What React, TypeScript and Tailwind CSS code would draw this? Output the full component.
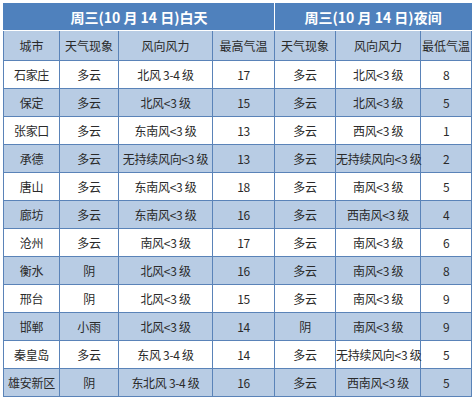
const rows: [string, string, string, string, string, string, string][] = [
  ["石家庄", "多云", "北风 3-4 级", "17", "多云", "北风<3 级", "8"],
  ["保定", "多云", "北风<3 级", "15", "多云", "北风<3 级", "5"],
  ["张家口", "多云", "东南风<3 级", "13", "多云", "西风<3 级", "1"],
  ["承德", "多云", "无持续风向<3 级", "13", "多云", "无持续风向<3 级", "2"],
  ["唐山", "多云", "东南风<3 级", "18", "多云", "南风<3 级", "5"],
  ["廊坊", "多云", "东南风<3 级", "16", "多云", "西南风<3 级", "4"],
  ["沧州", "多云", "南风<3 级", "17", "多云", "南风<3 级", "6"],
  ["衡水", "阴", "北风<3 级", "16", "多云", "南风<3 级", "8"],
  ["邢台", "阴", "北风<3 级", "15", "多云", "南风<3 级", "9"],
  ["邯郸", "小雨", "北风<3 级", "14", "阴", "南风<3 级", "9"],
  ["秦皇岛", "多云", "东风 3-4 级", "14", "多云", "无持续风向<3 级", "5"],
  ["雄安新区", "阴", "东北风 3-4 级", "16", "多云", "西南风<3 级", "5"],
];

const widths = [56, 59, 94, 62, 61, 85, 51];
const heads = ["城市", "天气现象", "风向风力", "最高气温", "天气现象", "风向风力", "最低气温"];

export default function App() {
  return (
    <div
      className="w-[474px] h-[400px] bg-white pt-[3px] pl-[3px]"
      style={{ fontFamily: '"Noto Sans CJK SC", "Noto Sans", sans-serif' }}
    >
      <table className="table-fixed border-collapse w-[468px] text-[12px] text-[#2a2a2a]">
        <colgroup>
          {widths.map((w, i) => (
            <col key={i} style={{ width: w }} />
          ))}
        </colgroup>
        <thead>
          <tr className="h-[27px] bg-[#4f81bd] text-white font-bold text-[14px]">
            <th colSpan={4} className="border border-[#4f81bd] border-r-white border-b-white">
              周三(10 月 14 日)白天
            </th>
            <th colSpan={3} className="border border-[#4f81bd] border-l-white border-b-white">
              周三(10 月 14 日)夜间
            </th>
          </tr>
          <tr className="h-[30px] bg-[#b8cce4]">
            {heads.map((h, i) => (
              <th key={i} className="border border-[#5a83b8] font-normal">
                {h}
              </th>
            ))}
          </tr>
        </thead>
        <tbody>
          {rows.map((r, ri) => (
            <tr key={ri} className={ri % 2 === 0 ? "h-[28px] bg-white" : "h-[28px] bg-[#b8cce4]"}>
              {r.map((c, ci) => (
                <td
                  key={ci}
                  className="border border-[#5a83b8] text-center whitespace-nowrap p-0 tracking-[-0.3px]"
                >
                  {c}
                </td>
              ))}
            </tr>
          ))}
        </tbody>
      </table>
    </div>
  );
}
